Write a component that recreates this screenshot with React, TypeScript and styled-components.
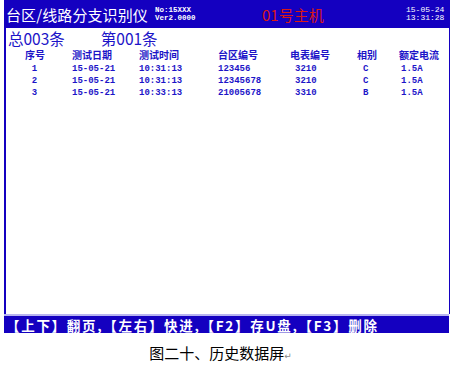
import { Fragment } from "react";
import styled, { createGlobalStyle } from "styled-components";

const GlobalStyle = createGlobalStyle`
  body {
    margin: 0;
    background: #ffffff;
    font-family: "Noto Sans CJK SC", "DejaVu Sans", sans-serif;
  }
`;

const Page = styled.div`
  width: 453px;
  height: 369px;
  background: #ffffff;
  overflow: hidden;
`;

const Screen = styled.div`
  margin-left: 4px;
  width: 446px;
  display: flex;
  flex-direction: column;
`;

const TitleBar = styled.div`
  height: 28px;
  background: #1400c0;
  display: flex;
  align-items: center;
  padding: 0 0 0 2px;
  color: #ffffff;
`;

const Title = styled.div`
  font-size: 15px;
  letter-spacing: 0.1px;
  width: 149px;
`;

const Version = styled.div`
  font-family: "Liberation Mono", monospace;
  font-weight: bold;
  font-size: 7.5px;
  line-height: 8px;
  width: 107px;
`;

const Host = styled.div`
  color: #d81818;
  font-size: 15px;
  width: 144px;
`;

const Clock = styled.div`
  font-family: "Liberation Mono", monospace;
  font-size: 8px;
  line-height: 8px;
`;

const Body = styled.div`
  height: 286px;
  border-left: 2px solid #1400c0;
  border-right: 1px solid #1400c0;
  color: #1c14c8;
`;

const Summary = styled.div`
  display: flex;
  gap: 36px;
  padding: 0 0 0 2px;
  height: 20px;
  font-size: 15.5px;
  line-height: 20px;
`;

const Table = styled.div`
  margin-top: 1px;
  display: grid;
  grid-template-columns: 47px 67px 79px 72px 67px 42px 48px;
  margin-left: 19px;
`;

const HeadCell = styled.div`
  font-size: 10px;
  font-weight: bold;
  line-height: 12px;
  margin-bottom: 2px;
  white-space: nowrap;
`;

const Cell = styled.div<{ $align?: string; $indent?: number }>`
  font-family: "Liberation Mono", monospace;
  font-weight: bold;
  font-size: 9px;
  line-height: 12px;
  text-align: ${(p) => p.$align || "left"};
  padding-left: ${(p) => p.$indent || 0}px;
  white-space: nowrap;
`;

const NumCell = styled(Cell)`
  width: 19px;
`;

const Footer = styled.div`
  border-top: 2px solid #b8b4f0;
  height: 19px;
  width: 445px;
  background: #1400c0;
  color: #ffffff;
  font-size: 13.5px;
  font-weight: bold;
  line-height: 18px;
  padding-left: 2px;
  letter-spacing: 1.7px;
  white-space: nowrap;
  box-sizing: border-box;
`;

const Caption = styled.div`
  margin-top: 10px;
  padding-right: 12px;
  text-align: center;
  font-size: 15px;
  line-height: 20px;
  color: #000000;
`;

const Return = styled.span`
  font-size: 9px;
  color: #888888;
`;

const headers = ["序号", "测试日期", "测试时间", "台区编号", "电表编号", "相别", "额定电流"];

const rows = [
  { no: "1", date: "15-05-21", time: "10:31:13", area: "123456", meter: "3210", phase: "C", amp: "1.5A" },
  { no: "2", date: "15-05-21", time: "10:31:13", area: "12345678", meter: "3210", phase: "C", amp: "1.5A" },
  { no: "3", date: "15-05-21", time: "10:33:13", area: "21005678", meter: "3310", phase: "B", amp: "1.5A" },
];

function App() {
  return (
    <Page>
      <GlobalStyle />
      <Screen>
        <TitleBar>
          <Title>台区/线路分支识别仪</Title>
          <Version>
            No:15XXX
            <br />
            Ver2.0000
          </Version>
          <Host>01号主机</Host>
          <Clock>
            15-05-24
            <br />
            13:31:28
          </Clock>
        </TitleBar>
        <Body>
          <Summary>
            <span>总003条</span>
            <span>第001条</span>
          </Summary>
          <Table>
            {headers.map((h) => (
              <HeadCell key={h}>{h}</HeadCell>
            ))}
            {rows.map((r) => (
              <Fragment key={r.no}>
                <NumCell $align="center">{r.no}</NumCell>
                <Cell>{r.date}</Cell>
                <Cell>{r.time}</Cell>
                <Cell>{r.area}</Cell>
                <Cell $indent={5}>{r.meter}</Cell>
                <Cell $indent={6}>{r.phase}</Cell>
                <Cell $indent={2}>{r.amp}</Cell>
              </Fragment>
            ))}
          </Table>
        </Body>
        <Footer>【上下】翻页,【左右】快进,【F2】存U盘,【F3】删除</Footer>
      </Screen>
      <Caption>
        图二十、历史数据屏<Return>↵</Return>
      </Caption>
    </Page>
  );
}

export default App;
